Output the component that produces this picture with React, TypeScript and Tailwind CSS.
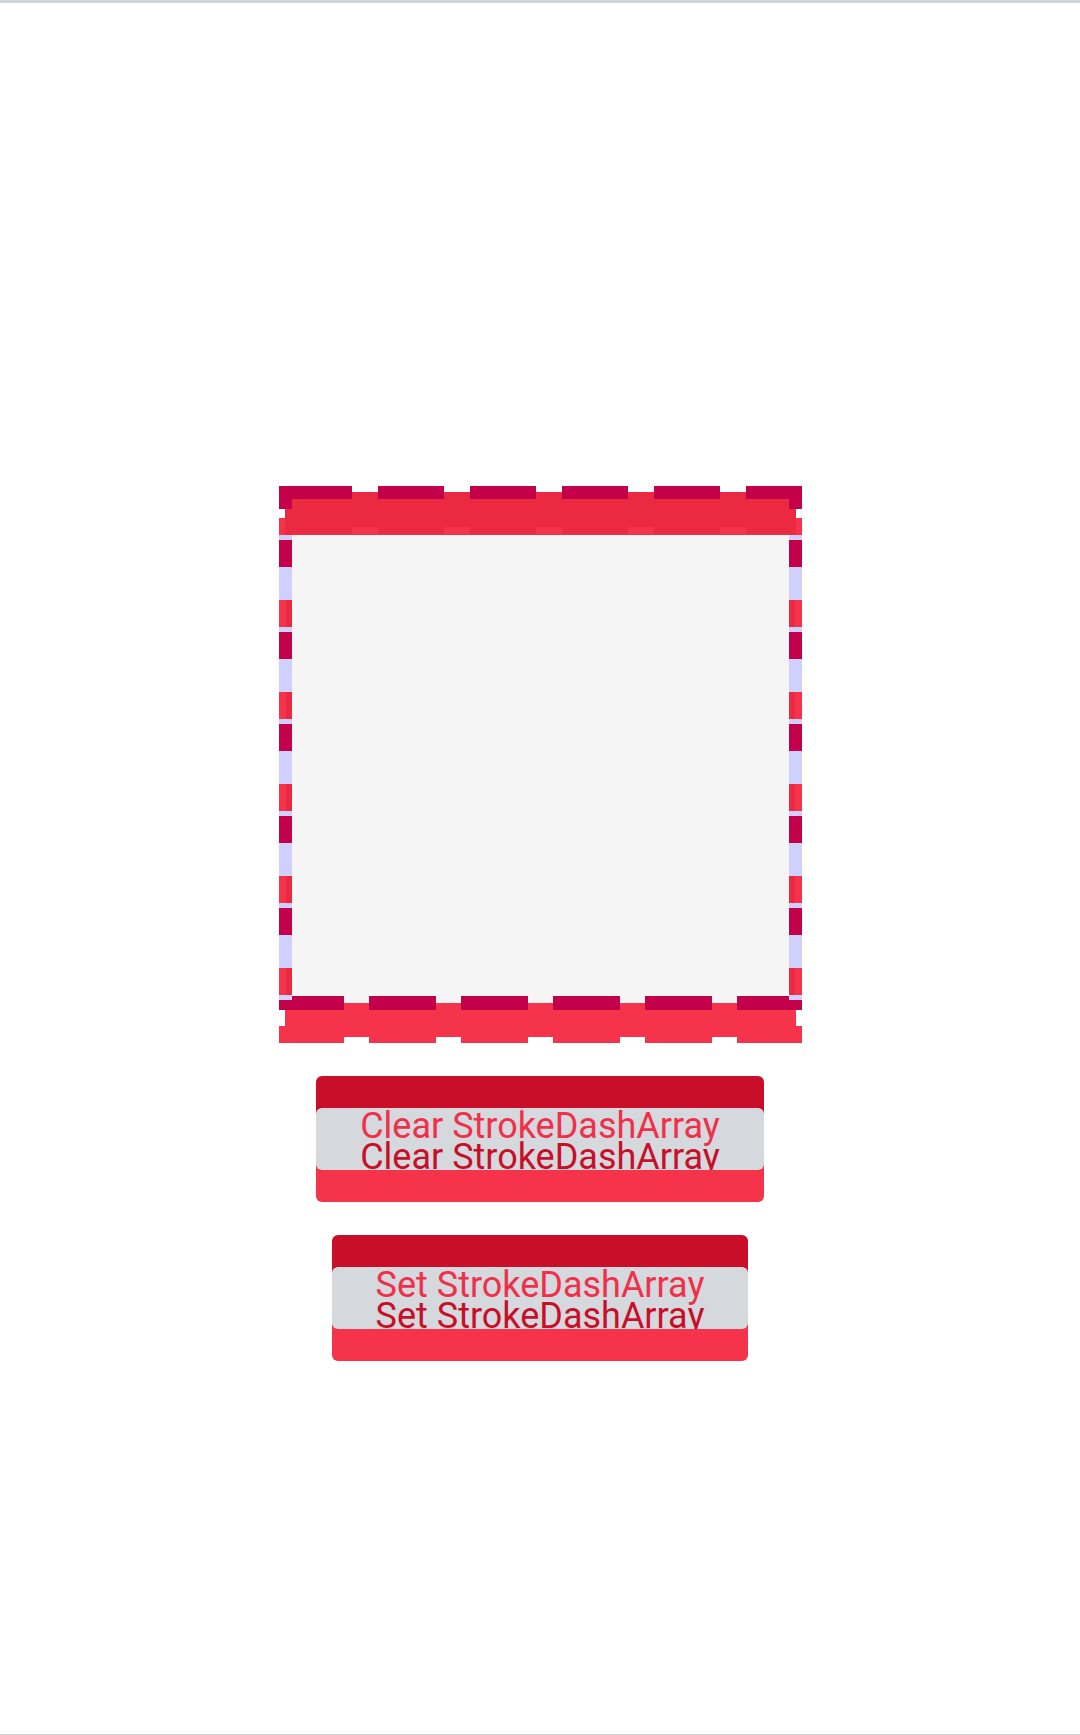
const DARK = "#c3004a";
const RED = "#eb2a42";
const LIGHT_RED = "#f5334b";
const LAVENDER = "#d0d0ff";

// dash runs along one edge: start offset, period, dash length, clipped to [min, max]
function dashes(start: number, period: number, len: number, min: number, max: number) {
  const out: [number, number][] = [];
  for (let x = start; x < max; x += period) {
    const a = Math.max(x, min);
    const b = Math.min(x + len, max);
    if (b > a) out.push([a, b - a]);
  }
  return out;
}

const W = 523;
const H = 557;

function DashedSquare() {
  const colDark = dashes(54, 92, 27, 48, 514);
  const colRed = dashes(114, 92, 27, 48, 514);

  return (
    <svg width={W} height={H} viewBox={`0 0 ${W} ${H}`} className="block" shapeRendering="crispEdges">
      {/* inner fill */}
      <rect x={13} y={41} width={497} height={476} fill="#f5f5f5" />

      {/* top stroke */}
      <rect x={0} y={32} width={W} height={17} fill={LIGHT_RED} />
      <rect x={6} y={6} width={511} height={35} fill={RED} />
      <rect x={6} y={41} width={7} height={8} fill={RED} />
      <rect x={510} y={41} width={7} height={8} fill={RED} />
      {dashes(6.5, 92, 66, 13, 510).map(([x, w], i) => (
        <rect key={`tr${i}`} x={x} y={41} width={w} height={7} fill={RED} />
      ))}
      {dashes(6.5, 92, 66, 0, W).map(([x, w], i) => (
        <rect key={`td${i}`} x={x} y={0} width={w} height={13} fill={DARK} />
      ))}
      <rect x={0} y={0} width={13} height={23} fill={DARK} />
      <rect x={510} y={0} width={13} height={23} fill={DARK} />

      {/* side strokes */}
      {[0, 510].map((cx) => (
        <g key={cx}>
          <rect x={cx} y={49} width={13} height={465} fill={LAVENDER} />
          {colDark.map(([y, h], i) => (
            <rect key={`d${i}`} x={cx} y={y} width={13} height={h} fill={DARK} />
          ))}
          {colRed.map(([y, h], i) => (
            <g key={`r${i}`}>
              <rect x={cx} y={y} width={13} height={h} fill={RED} />
              <rect x={cx === 0 ? 0 : 516} y={y} width={7} height={h} fill={LIGHT_RED} />
            </g>
          ))}
        </g>
      ))}

      {/* bottom stroke */}
      <rect x={6} y={517} width={511} height={34} fill={LIGHT_RED} />
      <rect x={0} y={540} width={W} height={11} fill={LIGHT_RED} />
      {dashes(-2, 92, 67, 0, W).map(([x, w], i) => (
        <g key={`b${i}`}>
          <rect x={x} y={510} width={w} height={14} fill={DARK} />
          <rect x={x} y={551} width={w} height={6} fill={LIGHT_RED} />
        </g>
      ))}
      <rect x={0} y={509} width={13} height={5} fill={LAVENDER} />
      <rect x={510} y={509} width={13} height={5} fill={LAVENDER} />
    </svg>
  );
}

function StrokeButton({ label }: { label: string }) {
  return (
    <div className="mt-[33px] rounded-[6px] overflow-hidden bg-linear-to-b from-[#c80e28] from-50% to-[#f5334b] to-50% py-[32px]">
      <div className="h-[62px] overflow-hidden rounded-[6px] bg-[#d5d8dc] px-[44px] pt-[3px] font-[Roboto,sans-serif] text-[36px] leading-[31px] whitespace-nowrap">
        <div className="text-[#f0304a]">{label}</div>
        <div className="text-[#c80e28]">{label}</div>
      </div>
    </div>
  );
}

export default function App() {
  return (
    <div className="w-full h-[1735px] bg-white border-t-[3px] border-t-[#cfd6de] border-b border-b-[#d0d0d0] flex flex-col items-center pt-[483px]">
      <DashedSquare />
      <StrokeButton label="Clear StrokeDashArray" />
      <StrokeButton label="Set StrokeDashArray" />
    </div>
  );
}
